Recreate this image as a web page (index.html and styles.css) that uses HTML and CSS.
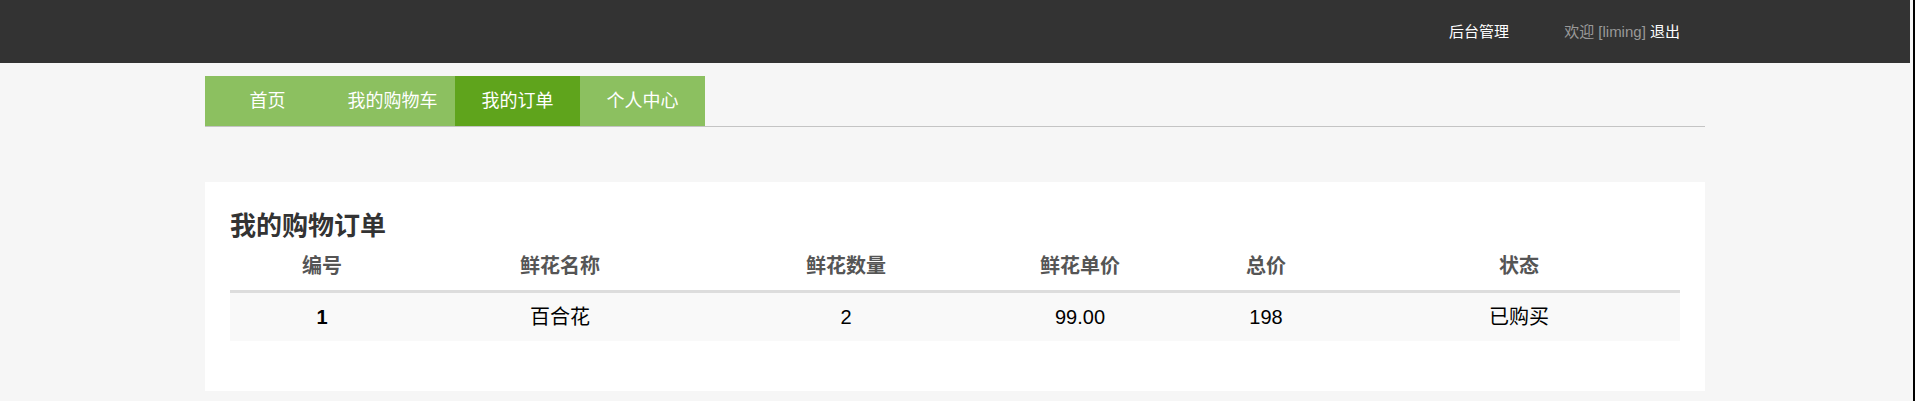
FILE: index.html
```html
<!DOCTYPE html>
<html lang="zh-CN">
<head>
<meta charset="utf-8">
<title>我的订单</title>
<link rel="stylesheet" href="styles.css">
</head>
<body>
<header class="topbar">
  <div class="topbar-inner">
    <a class="top-link" href="#">后台管理</a>
    <span class="welcome">欢迎 [liming] <a class="top-link" href="#">退出</a></span>
  </div>
</header>
<main class="container">
  <nav class="tabs">
    <a class="tab" href="#">首页</a>
    <a class="tab" href="#">我的购物车</a>
    <a class="tab active" href="#">我的订单</a>
    <a class="tab" href="#">个人中心</a>
  </nav>
  <section class="card">
    <h3 class="card-title">我的购物订单</h3>
    <table class="orders">
      <colgroup>
        <col class="c1"><col class="c2"><col class="c3"><col class="c4"><col class="c5"><col class="c6">
      </colgroup>
      <thead>
        <tr><th>编号</th><th>鲜花名称</th><th>鲜花数量</th><th>鲜花单价</th><th>总价</th><th>状态</th></tr>
      </thead>
      <tbody>
        <tr><td class="id">1</td><td>百合花</td><td>2</td><td>99.00</td><td>198</td><td>已购买</td></tr>
      </tbody>
    </table>
  </section>
</main>
</body>
</html>
```
FILE: styles.css
```css
html {
  background: #000;
}
body {
  margin: 0 2px 0 0;
  padding: 0 3px 0 0;
  min-height: 401px;
  background: #f6f6f6;
  font-family: "Liberation Sans", "Noto Sans CJK SC", sans-serif;
  color: #000;
}
a {
  text-decoration: none;
}
.topbar {
  height: 63px;
  background: #333;
}
.topbar-inner {
  width: 1500px;
  height: 63px;
  margin: 0 auto;
  box-sizing: border-box;
  padding: 0 25px 3px 0;
  display: flex;
  justify-content: flex-end;
  align-items: center;
  gap: 55px;
  font-size: 15px;
}
.top-link {
  color: #fff;
}
.welcome {
  color: #999;
}
.container {
  width: 1500px;
  margin: 0 auto;
  padding-top: 13px;
}
.tabs {
  display: flex;
  border-bottom: 1px solid #c4c4c4;
}
.tab {
  width: 125px;
  height: 50px;
  line-height: 50px;
  text-align: center;
  background: #8cc060;
  color: #fff;
  font-size: 18px;
}
.tab.active {
  background: #5fa41c;
}
.card {
  margin-top: 55px;
  background: #fff;
  padding: 29px 25px 50px;
}
.card-title {
  margin: 0;
  font-size: 26px;
  line-height: 31px;
  font-weight: bold;
  color: #333;
}
.orders {
  width: 100%;
  border-collapse: collapse;
  table-layout: fixed;
}
.c1 { width: 184px; }
.c2 { width: 292px; }
.c3 { width: 280px; }
.c4 { width: 188px; }
.c5 { width: 184px; }
.c6 { width: 322px; }
.orders th {
  font-size: 20px;
  line-height: 24px;
  padding: 12px 0;
  color: #555;
  font-weight: bold;
  text-align: center;
  border-bottom: 3px solid #ddd;
}
.orders td {
  font-size: 20px;
  line-height: 24px;
  padding: 12px 0;
  text-align: center;
  background: #f9f9f9;
  color: #000;
}
.orders td.id {
  font-weight: bold;
}
```
